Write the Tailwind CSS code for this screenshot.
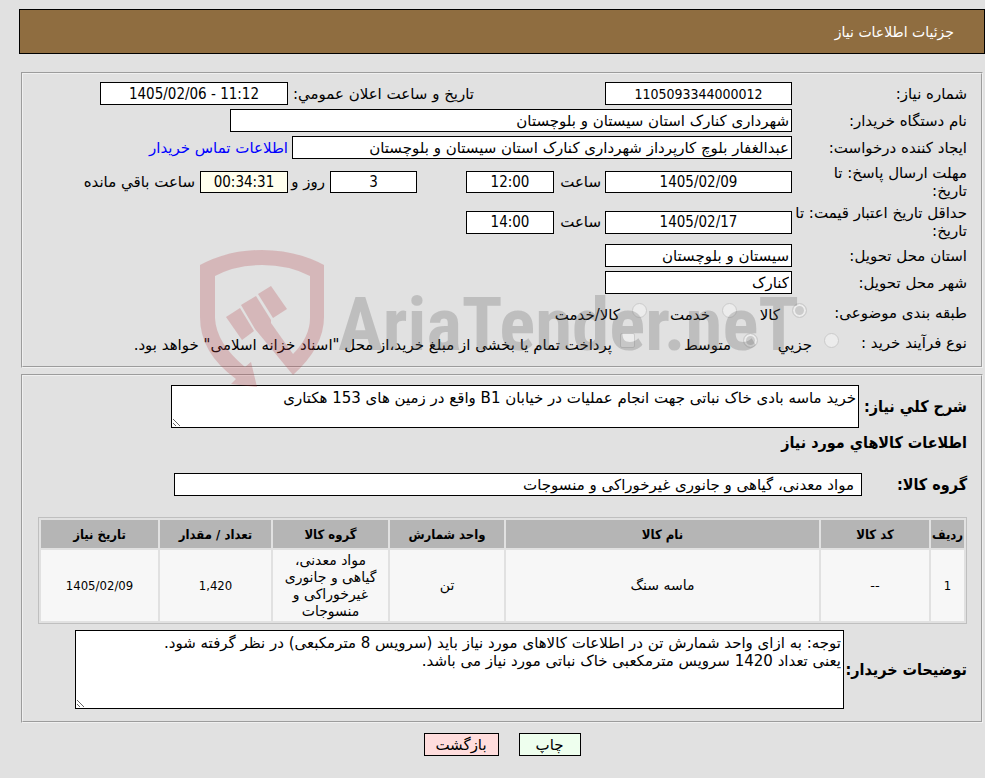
<!DOCTYPE html>
<html lang="fa" dir="rtl">
<head>
    <meta charset="UTF-8">
    <meta name="viewport" content="width=device-width, initial-scale=1.0">
    <title>جزئیات اطلاعات نیاز</title>
    <script src="https://cdn.jsdelivr.net/npm/@tailwindcss/browser@4"></script>
</head>
<body class="bg-[#e1e1e1] pt-[9px] pl-[19px] pb-5 text-[15px] leading-[18px] text-black font-['DejaVu_Sans',sans-serif]">

    <header class="flex h-[45px] items-center border border-black bg-[#8f6d40] px-[30px] text-white">
        <h1 class="text-[14px]">جزئیات اطلاعات نیاز</h1>
    </header>

    <main class="mx-[2px] mt-[18px]">
        <!-- General information -->
        <section class="relative border-2 border-[#f0f0f0] [border-style:groove] pt-2 pb-3 pr-[14px]">
            <div class="flex flex-col gap-1">
                <div class="flex h-[23px] items-center">
                    <label for="needNo" class="w-[175px] shrink-0">شماره نیاز:</label>
                    <input id="needNo" value="1105093344000012" readonly class="h-[23px] w-[187px] border border-black bg-white text-center text-[14px] font-['DejaVu_Sans_Condensed',sans-serif]">
                    <label for="announce" class="mr-[131px] ml-[5px]">تاریخ و ساعت اعلان عمومي:</label>
                    <input id="announce" dir="ltr" value="1405/02/06 - 11:12" readonly class="h-[23px] w-[188px] border border-black bg-white text-center font-['DejaVu_Sans_Condensed',sans-serif]">
                </div>
                <div class="flex h-[23px] items-center">
                    <label for="org" class="w-[175px] shrink-0">نام دستگاه خریدار:</label>
                    <input id="org" value="شهرداری کنارک استان سیستان و بلوچستان" readonly class="h-[23px] w-[562px] border border-black bg-white px-[2px]">
                </div>
                <div class="flex h-[23px] items-center">
                    <label for="creator" class="w-[175px] shrink-0">ایجاد کننده درخواست:</label>
                    <input id="creator" value="عبدالغفار بلوچ کارپرداز شهرداری کنارک استان سیستان و بلوچستان" readonly class="h-[23px] w-[500px] border border-black bg-white px-[2px]">
                    <a href="#" class="mr-1 text-[#0000ff]">اطلاعات تماس خریدار</a>
                </div>
                <div class="flex h-[37px] items-center">
                    <label for="deadline" class="w-[175px] shrink-0 pl-4">مهلت ارسال پاسخ: تا تاریخ:</label>
                    <input id="deadline" value="1405/02/09" readonly class="h-[22px] w-[187px] border border-black bg-white text-center font-['DejaVu_Sans_Condensed',sans-serif]">
                    <label for="deadlineHour" class="mx-1 w-[43px]">ساعت</label>
                    <input id="deadlineHour" value="12:00" readonly class="h-[22px] w-[88px] border border-black bg-white text-center font-['DejaVu_Sans_Condensed',sans-serif]">
                    <input id="days" value="3" readonly class="mr-[49px] h-[22px] w-[87px] border border-black bg-white text-center font-['DejaVu_Sans_Condensed',sans-serif]">
                    <label for="days" class="mr-[5px] w-[37px] whitespace-nowrap">روز و</label>
                    <input id="remain" value="00:34:31" readonly class="h-[22px] w-[88px] border border-black bg-[#ffffee] text-center font-['DejaVu_Sans_Condensed',sans-serif]">
                    <label for="remain" class="mr-[5px]">ساعت باقي مانده</label>
                </div>
                <div class="flex h-[36px] items-center">
                    <label for="validity" class="w-[175px] shrink-0">حداقل تاریخ اعتبار قیمت: تا تاریخ:</label>
                    <input id="validity" value="1405/02/17" readonly class="h-[23px] w-[187px] border border-black bg-white text-center font-['DejaVu_Sans_Condensed',sans-serif]">
                    <label for="validityHour" class="mx-1 w-[43px]">ساعت</label>
                    <input id="validityHour" value="14:00" readonly class="h-[23px] w-[88px] border border-black bg-white text-center font-['DejaVu_Sans_Condensed',sans-serif]">
                </div>
                <div class="flex h-[23px] items-center">
                    <label for="province" class="w-[175px] shrink-0">استان محل تحویل:</label>
                    <input id="province" value="سیستان و بلوچستان" readonly class="h-[23px] w-[187px] border border-black bg-white px-[2px]">
                </div>
                <div class="flex h-[23px] items-center">
                    <label for="city" class="w-[175px] shrink-0">شهر محل تحویل:</label>
                    <input id="city" value="کنارک" readonly class="h-[23px] w-[187px] border border-black bg-white px-[2px]">
                </div>
                <div class="flex h-[29px] items-center">
                    <span class="w-[160px] shrink-0">طبقه بندی موضوعی:</span>
                    <input id="goods" type="radio" name="category" checked disabled class="mb-1 size-[15px] appearance-none rounded-full border border-[#cbcbcb] bg-[#ececec] checked:bg-[#cbcbcb] checked:shadow-[inset_0_0_0_2px_#ececec]">
                    <label for="goods" class="mr-3 w-[43px] pt-1">کالا</label>
                    <input id="service" type="radio" name="category" disabled class="mb-1 size-[15px] appearance-none rounded-full border border-[#cbcbcb] bg-[#ececec]">
                    <label for="service" class="mr-3 w-[63px] pt-1">خدمت</label>
                    <input id="both" type="radio" name="category" disabled class="mb-1 size-[15px] appearance-none rounded-full border border-[#cbcbcb] bg-[#ececec]">
                    <label for="both" class="mr-3 pt-1">کالا/خدمت</label>
                </div>
                <div class="flex h-[23px] items-center">
                    <span class="w-[128px] shrink-0">نوع فرآیند خرید :</span>
                    <input id="small" type="radio" name="process" disabled class="mb-1 size-[15px] appearance-none rounded-full border border-[#cbcbcb] bg-[#ececec]">
                    <label for="small" class="mr-3 w-[54px] pt-1">جزیي</label>
                    <input id="medium" type="radio" name="process" checked disabled class="mb-1 size-[15px] appearance-none rounded-full border border-[#cbcbcb] bg-[#ececec] checked:bg-[#cbcbcb] checked:shadow-[inset_0_0_0_2px_#ececec]">
                    <label for="medium" class="mr-3 w-[96px] pt-1">متوسط</label>
                    <input id="treasury" type="checkbox" disabled class="mb-1 size-[15px] appearance-none rounded-[2px] border border-[#cbcbcb] bg-[#ececec]">
                    <label for="treasury" class="mr-2 pt-1">پرداخت تمام یا بخشی از مبلغ خرید،از محل "اسناد خزانه اسلامی" خواهد بود.</label>
                </div>
            </div>

            <!-- Watermark -->
            <div dir="ltr" class="pointer-events-none absolute top-[176px] left-[177px] flex items-start gap-3">
                <svg class="h-[138px] w-[126px] shrink-0" viewBox="0 0 126 138" fill="#b53d45" fill-opacity="0.25">
                    <path d="M0 15Q28 0 62 0T124 15V67Q124 97 93 125L55 79L41 55L56 46L71 70V73L93 104Q110 87 110 68V26Q89 15 62 15T15 26V68Q16 93 45 117L51 112L57 137L31 134L36 129Q0 103 0 67Z"/>
                    <path d="M26 67L40 58L54 81L42 90Z"/>
                    <path d="M58 44L71 36L87 59L73 68Z"/>
                </svg>
                <span class="pt-[34px] text-[75px] leading-[80px] font-bold whitespace-nowrap text-[#595959]/25 font-['Roboto_Condensed','Roboto',sans-serif]">AriaTender.neT</span>
            </div>
        </section>

        <!-- Need details -->
        <section class="mt-[6px] border-2 border-[#f0f0f0] [border-style:groove] pt-[9px] pr-[14px] pb-3">
            <div class="flex items-center">
                <label for="summary" class="w-[108px] shrink-0 whitespace-nowrap text-[16px] font-bold font-['DejaVu_Sans_Condensed',sans-serif]">شرح كلي نیاز:</label>
                <textarea id="summary" readonly class="block h-[43px] w-[688px] border border-black bg-white px-[2px] pt-[3px]">خرید ماسه بادی خاک نباتی جهت انجام عملیات در خیابان B1 واقع در زمین های 153 هکتاری</textarea>
            </div>
            <h2 class="mt-[6px] text-[16px] font-bold font-['DejaVu_Sans_Condensed',sans-serif]">اطلاعات کالاهاي مورد نیاز</h2>
            <div class="mt-[21px] flex items-center">
                <label for="group" class="w-[105px] shrink-0 text-[16px] font-bold font-['DejaVu_Sans_Condensed',sans-serif]">گروه کالا:</label>
                <input id="group" value="مواد معدنی، گیاهی و جانوری غیرخوراکی و منسوجات" readonly class="h-[23px] w-[688px] border border-black bg-white px-[7px]">
            </div>

            <div class="mt-[21px] pl-[15px]">
                <table class="w-full table-fixed border-separate border-spacing-[2px] border border-[#bfbfbf] text-center text-[13px] leading-[17px]">
                    <thead>
                        <tr class="h-[28px] bg-[#b5b5b5] font-['DejaVu_Sans_Condensed',sans-serif]">
                            <th class="w-[33px]">ردیف</th>
                            <th class="w-[108px]">کد کالا</th>
                            <th>نام کالا</th>
                            <th class="w-[114px]">واحد شمارش</th>
                            <th class="w-[115px]">گروه کالا</th>
                            <th class="w-[111px]">تعداد / مقدار</th>
                            <th class="w-[117px]">تاریخ نیاز</th>
                        </tr>
                    </thead>
                    <tbody>
                        <tr class="h-[71px] bg-[#f7f7f7]">
                            <td class="font-['DejaVu_Sans_Condensed',sans-serif]">1</td>
                            <td>--</td>
                            <td class="text-[14px]">ماسه سنگ</td>
                            <td class="text-[14px]">تن</td>
                            <td class="px-[10px] text-[14px]">مواد معدنی، گیاهی و جانوری غیرخوراکی و منسوجات</td>
                            <td class="font-['DejaVu_Sans_Condensed',sans-serif]">1,420</td>
                            <td class="font-['DejaVu_Sans_Condensed',sans-serif]">1405/02/09</td>
                        </tr>
                    </tbody>
                </table>
            </div>

            <div class="mt-[6px] flex items-center">
                <label for="notes" class="w-[123px] shrink-0 whitespace-nowrap text-[16px] font-bold font-['DejaVu_Sans_Condensed',sans-serif]">توضیحات خریدار:</label>
                <textarea id="notes" readonly class="block h-[79px] w-[769px] border border-black bg-white px-[2px] pt-[3px]">توجه: به ازای واحد شمارش تن در اطلاعات کالاهای مورد نیاز باید (سرویس 8 مترمکبعی) در نظر گرفته شود.
یعنی تعداد 1420 سرویس مترمکعبی خاک نباتی مورد نیاز می باشد.</textarea>
            </div>
        </section>
    </main>

    <div class="mt-[10px] flex justify-center gap-5">
        <button type="button" class="h-[23px] w-[62px] border border-black bg-[#eeffee]">چاپ</button>
        <button type="button" class="h-[23px] w-[75px] border border-black bg-[#ffdddd]">بازگشت</button>
    </div>
</body>
</html>
